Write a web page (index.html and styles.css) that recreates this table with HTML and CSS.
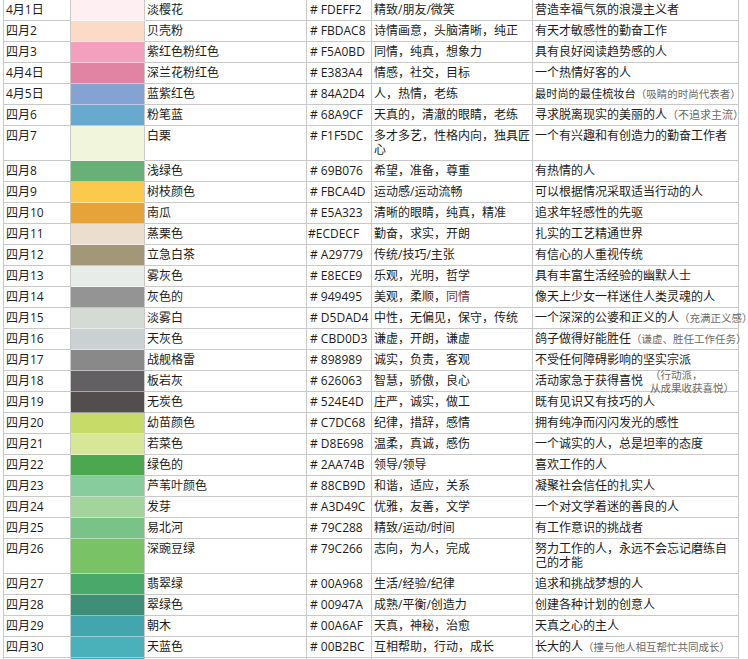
FILE: index.html
```html
<!DOCTYPE html>
<html lang="zh">
<head>
<meta charset="utf-8">
<title>四月的颜色</title>
<link rel="stylesheet" href="styles.css">
</head>
<body>
<div class="sheet">
  <div class="row"><div class="cell">4月1日</div><div class="cell swatch" style="background:#FDEFF2"></div><div class="cell">淡樱花</div><div class="cell hex"># FDEFF2</div><div class="cell">精致/朋友/微笑</div><div class="cell desc">营造幸福气氛的浪漫主义者</div></div>
  <div class="row"><div class="cell">四月2</div><div class="cell swatch" style="background:#FBDAC8"></div><div class="cell">贝壳粉</div><div class="cell hex"># FBDAC8</div><div class="cell">诗情画意，头脑清晰，纯正</div><div class="cell desc">有天才敏感性的勤奋工作</div></div>
  <div class="row"><div class="cell">四月3</div><div class="cell swatch" style="background:#F2A0BD"></div><div class="cell">紫红色粉红色</div><div class="cell hex"># F5A0BD</div><div class="cell">同情，纯真，想象力</div><div class="cell desc">具有良好阅读趋势感的人</div></div>
  <div class="row"><div class="cell">4月4日</div><div class="cell swatch" style="background:#E183A3"></div><div class="cell">深兰花粉红色</div><div class="cell hex"># E383A4</div><div class="cell">情感，社交，目标</div><div class="cell desc">一个热情好客的人</div></div>
  <div class="row"><div class="cell">4月5日</div><div class="cell swatch" style="background:#84A2D2"></div><div class="cell">蓝紫红色</div><div class="cell hex"># 84A2D4</div><div class="cell">人，热情，老练</div><div class="cell desc"><span class="small-main">最时尚的最佳梳妆台</span><span class="note">（吸睛的时尚代表者）</span></div></div>
  <div class="row"><div class="cell">四月6</div><div class="cell swatch" style="background:#68A9CF"></div><div class="cell">粉笔蓝</div><div class="cell hex"># 68A9CF</div><div class="cell">天真的，清澈的眼睛，老练</div><div class="cell desc">寻求脱离现实的美丽的人<span class="note note-lg">（不追求主流）</span></div></div>
  <div class="row"><div class="cell">四月7</div><div class="cell swatch" style="background:#F1F5DC"></div><div class="cell">白栗</div><div class="cell hex"># F1F5DC</div><div class="cell">多才多艺，性格内向，独具匠心</div><div class="cell desc">一个有兴趣和有创造力的勤奋工作者</div></div>
  <div class="row"><div class="cell">四月8</div><div class="cell swatch" style="background:#69B076"></div><div class="cell">浅绿色</div><div class="cell hex"># 69B076</div><div class="cell">希望，准备，尊重</div><div class="cell desc">有热情的人</div></div>
  <div class="row"><div class="cell">四月9</div><div class="cell swatch" style="background:#FBCA4D"></div><div class="cell">树枝颜色</div><div class="cell hex"># FBCA4D</div><div class="cell">运动感/运动流畅</div><div class="cell desc">可以根据情况采取适当行动的人</div></div>
  <div class="row"><div class="cell">四月10</div><div class="cell swatch" style="background:#E5A33A"></div><div class="cell">南瓜</div><div class="cell hex"># E5A323</div><div class="cell">清晰的眼睛，纯真，精准</div><div class="cell desc">追求年轻感性的先驱</div></div>
  <div class="row"><div class="cell">四月11</div><div class="cell swatch" style="background:#ECDECF"></div><div class="cell">蒸栗色</div><div class="cell hex hex-tight">#ECDECF</div><div class="cell">勤奋，求实，开朗</div><div class="cell desc">扎实的工艺精通世界</div></div>
  <div class="row"><div class="cell">四月12</div><div class="cell swatch" style="background:#A29779"></div><div class="cell">立急白茶</div><div class="cell hex"># A29779</div><div class="cell">传统/技巧/主张</div><div class="cell desc">有信心的人重视传统</div></div>
  <div class="row"><div class="cell">四月13</div><div class="cell swatch" style="background:#E8ECE9"></div><div class="cell">雾灰色</div><div class="cell hex"># E8ECE9</div><div class="cell">乐观，光明，哲学</div><div class="cell desc">具有丰富生活经验的幽默人士</div></div>
  <div class="row"><div class="cell">四月14</div><div class="cell swatch" style="background:#949495"></div><div class="cell">灰色的</div><div class="cell hex"># 949495</div><div class="cell">美观，柔顺，<span class="accent">同情</span></div><div class="cell desc">像天上少女一样迷住人类灵魂的人</div></div>
  <div class="row"><div class="cell">四月15</div><div class="cell swatch" style="background:#D5DAD4"></div><div class="cell">淡雾白</div><div class="cell hex"># D5DAD4</div><div class="cell">中性，无偏见，保守，传统</div><div class="cell desc">一个深深的公婆和正义的人<span class="note">（充满正义感）</span></div></div>
  <div class="row"><div class="cell">四月16</div><div class="cell swatch" style="background:#CBD0D3"></div><div class="cell">天灰色</div><div class="cell hex"># CBD0D3</div><div class="cell">谦虚，开朗，谦虚</div><div class="cell desc">鸽子做得好能胜任<span class="note">（谦虚、胜任工作任务）</span></div></div>
  <div class="row"><div class="cell">四月17</div><div class="cell swatch" style="background:#898989"></div><div class="cell">战舰格雷</div><div class="cell hex"># 898989</div><div class="cell">诚实，负责，客观</div><div class="cell desc">不受任何障碍影响的坚实宗派</div></div>
  <div class="row"><div class="cell">四月18</div><div class="cell swatch" style="background:#626063"></div><div class="cell">板岩灰</div><div class="cell hex"># 626063</div><div class="cell">智慧，骄傲，良心</div><div class="cell desc">活动家急于获得喜悦<span class="note note-block">（行动派，<br>从成果收获喜悦）</span></div></div>
  <div class="row"><div class="cell">四月19</div><div class="cell swatch" style="background:#524E4D"></div><div class="cell">无炭色</div><div class="cell hex"># 524E4D</div><div class="cell">庄严，诚实，做工</div><div class="cell desc">既有见识又有技巧的人</div></div>
  <div class="row"><div class="cell">四月20</div><div class="cell swatch" style="background:#C7DC68"></div><div class="cell">幼苗颜色</div><div class="cell hex"># C7DC68</div><div class="cell">纪律，措辞，感情</div><div class="cell desc">拥有纯净而闪闪发光的感性</div></div>
  <div class="row"><div class="cell">四月21</div><div class="cell swatch" style="background:#D8E698"></div><div class="cell">若菜色</div><div class="cell hex"># D8E698</div><div class="cell">温柔，真诚，感伤</div><div class="cell desc">一个诚实的人，总是坦率的态度</div></div>
  <div class="row"><div class="cell">四月22</div><div class="cell swatch" style="background:#4BA84E"></div><div class="cell">绿色的</div><div class="cell hex"># 2AA74B</div><div class="cell">领导/领导</div><div class="cell desc">喜欢工作的人</div></div>
  <div class="row"><div class="cell">四月23</div><div class="cell swatch" style="background:#88CB9D"></div><div class="cell">芦苇叶颜色</div><div class="cell hex"># 88CB9D</div><div class="cell">和谐，适应，关系</div><div class="cell desc">凝聚社会信任的扎实人</div></div>
  <div class="row"><div class="cell">四月24</div><div class="cell swatch" style="background:#A3D49C"></div><div class="cell">发芽</div><div class="cell hex"># A3D49C</div><div class="cell">优雅，友善，文学</div><div class="cell desc">一个对文学着迷的善良的人</div></div>
  <div class="row"><div class="cell">四月25</div><div class="cell swatch" style="background:#79C288"></div><div class="cell">易北河</div><div class="cell hex"># 79C288</div><div class="cell">精致/运动/时间</div><div class="cell desc">有工作意识的挑战者</div></div>
  <div class="row"><div class="cell">四月26</div><div class="cell swatch" style="background:#79C266"></div><div class="cell">深豌豆绿</div><div class="cell hex"># 79C266</div><div class="cell">志向，为人，完成</div><div class="cell desc wrap">努力工作的人，永远不会忘记磨练自己的才能</div></div>
  <div class="row"><div class="cell">四月27</div><div class="cell swatch" style="background:#4BA86B"></div><div class="cell">翡翠绿</div><div class="cell hex"># 00A968</div><div class="cell">生活/经验/纪律</div><div class="cell desc">追求和挑战梦想的人</div></div>
  <div class="row"><div class="cell">四月28</div><div class="cell swatch" style="background:#3F8E78"></div><div class="cell">翠绿色</div><div class="cell hex"># 00947A</div><div class="cell">成熟/平衡/创造力</div><div class="cell desc">创建各种计划的创意人</div></div>
  <div class="row"><div class="cell">四月29</div><div class="cell swatch" style="background:#43A5AE"></div><div class="cell">朝木</div><div class="cell hex"># 00A6AF</div><div class="cell">天真，神秘，治愈</div><div class="cell desc">天真之心的主人</div></div>
  <div class="row"><div class="cell">四月30</div><div class="cell swatch" style="background:#4AB0BA"></div><div class="cell">天蓝色</div><div class="cell hex"># 00B2BC</div><div class="cell">互相帮助，行动，成长</div><div class="cell desc">长大的人<span class="note">（撞与他人相互帮忙共同成长）</span></div></div>
  <div class="row"><div class="cell"></div><div class="cell swatch" style="background:#3FA6B3"></div><div class="cell"></div><div class="cell hex"></div><div class="cell"></div><div class="cell desc"></div></div>
</div>
</body>
</html>
```

FILE: styles.css
```css
html, body {
  margin: 0;
  padding: 0;
  background: #ffffff;
  overflow: hidden;
}

body {
  font-family: "Open Sans", "Noto Sans CJK SC", sans-serif;
  font-size: 12px;
  color: #1c1c1c;
}

.sheet {
  margin-left: 3px;
  width: 735px;
  border-left: 1px solid #c9c9c9;
}

.row {
  display: grid;
  grid-template-columns: 67px 74px 162px 65px 161px 206px;
  min-height: 21px;
}

.cell {
  padding: 3px 1px 3px 2px;
  line-height: 14px;
  border-right: 1px solid #c9c9c9;
  border-bottom: 1px solid #c9c9c9;
  white-space: nowrap;
  min-width: 0;
}

.row > .cell:nth-child(5) {
  white-space: normal;
  word-break: break-all;
}

.swatch {
  padding: 0;
  border-bottom-color: rgba(255, 255, 255, 0.45);
}

.hex {
  padding-left: 3px;
}

.hex-tight {
  padding-left: 1px;
}

.desc {
  padding-right: 3px;
}

.desc.wrap {
  white-space: normal;
  word-break: break-all;
}

.small-main {
  font-size: 11.2px;
}

.note {
  font-size: 10.5px;
  color: #6a6a6a;
}

.note-lg {
  font-size: 11px;
}

.note-block {
  display: inline-block;
  vertical-align: middle;
  line-height: 13px;
  margin: -7px 0 -7px 7px;
}

.accent {
  color: #7a3434;
}
```
